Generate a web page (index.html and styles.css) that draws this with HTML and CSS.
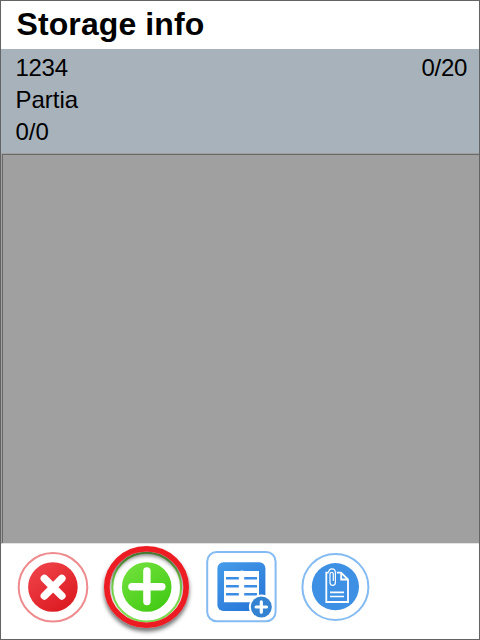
FILE: index.html
```html
<!DOCTYPE html>
<html lang="en">
<head>
<meta charset="utf-8">
<title>Storage info</title>
<link rel="stylesheet" href="styles.css">
</head>
<body>
<main class="screen">
  <h1 class="title">Storage info</h1>
  <section class="summary">
    <div class="row"><span class="num">1234</span><span class="num">0/20</span></div>
    <div class="row">Partia</div>
    <div class="row">0/0</div>
  </section>
  <section class="list"></section>
  <footer class="toolbar">
    <svg class="tool" width="90" height="95" viewBox="8 544 90 95">
      <defs>
        <linearGradient id="red" x1="0" y1="0" x2=".7" y2="1"><stop offset="0" stop-color="#f2474e"/><stop offset="1" stop-color="#dc1a21"/></linearGradient>
      </defs>
      <circle cx="53" cy="587.2" r="34.3" fill="#fff" stroke="#ee8b8e" stroke-width="2"/>
      <circle cx="52.9" cy="587" r="24.8" fill="url(#red)"/>
      <path d="M44.4 578.5l17.4 17.4M61.8 578.5l-17.4 17.4" stroke="#fff" stroke-width="7.6" stroke-linecap="round"/>
    </svg>
    <svg class="tool" width="98" height="95" viewBox="98 544 98 95">
      <defs>
        <linearGradient id="green" x1="0" y1="0" x2=".7" y2="1"><stop offset="0" stop-color="#76e340"/><stop offset="1" stop-color="#43cb15"/></linearGradient>
        <filter id="shadow" x="-20%" y="-20%" width="140%" height="150%"><feDropShadow dx="0" dy="3.5" stdDeviation="2.3" flood-color="#000" flood-opacity=".6"/></filter>
      </defs>
      <circle cx="146.7" cy="587.2" r="34.4" fill="#fff" stroke="#7ddf50" stroke-width="2"/>
      <circle cx="146.7" cy="587" r="24.8" fill="url(#green)"/>
      <path d="M146.9 571v30.6M131.9 586.7h30" stroke="#fff" stroke-width="7.4" stroke-linecap="round"/>
      <ellipse cx="146.5" cy="587" rx="39.7" ry="38.2" fill="none" stroke="#ed1c24" stroke-width="5.6" filter="url(#shadow)"/>
    </svg>
    <svg class="tool" width="92" height="95" viewBox="196 544 92 95">
      <defs>
        <linearGradient id="blue" x1="0" y1="0" x2=".7" y2="1"><stop offset="0" stop-color="#459ce9"/><stop offset="1" stop-color="#2877d8"/></linearGradient>
      </defs>
      <rect x="207.2" y="551.9" width="68.4" height="69.4" rx="9.5" fill="#fff" stroke="#83bbf2" stroke-width="2"/>
      <rect x="217.4" y="562.2" width="48" height="48.8" rx="6" fill="url(#blue)"/>
      <path d="M224 571h15.500l2.500-.5 2.500.5H259v31.200H224z" fill="#fff"/>
      <path d="M226 578.300h12.800M244.200 578.300H257M226 586.300h12.800M244.200 586.300H257M226 594.300h12.800M244.200 594.300H257" stroke="#3b8de3" stroke-width="2.500"/>
      <circle cx="261.300" cy="607" r="12.400" fill="#fff"/>
      <circle cx="261.300" cy="607" r="10.500" fill="#3482d2"/>
      <path d="M261.300 601.800v10.400M256.100 607h10.400" stroke="#fff" stroke-width="3.200" stroke-linecap="round"/>
    </svg>
    <svg class="tool" width="96" height="95" viewBox="288 544 96 95">
      <circle cx="335.400" cy="587" r="33" fill="#fff" stroke="#83bbf2" stroke-width="2"/>
      <circle cx="335.400" cy="586.700" r="23.600" fill="#3d90e4"/>
      <g fill="none" stroke="#fff">
        <path d="M329 572.700h-2.700v29.300h21.700v-22.500l-7-6.800h-4.500" stroke-width="1.800"/>
        <path d="M341.200 573v6.500h6.800" stroke-width="1.800"/>
        <path d="M330 592.400h14M330 596.500h14" stroke-width="1.600"/>
        <path d="M330 572v10.500c0 4 5.200 4 5.200 0V572" stroke="#3d90e4" stroke-width="3"/>
        <path d="M333.300 574.500v6.500M330 574v8.500c0 3.800 5.400 3.800 5.400 0v-9.700c0-5.200-6.800-5.200-6.800-.3M330 574.500c0-3 3.300-3 3.300 0" stroke-width="1.200"/>
      </g>
    </svg>
  </footer>
</main>
</body>
</html>
```
FILE: styles.css
```css
* {
  box-sizing: border-box;
}

body {
  margin: 0;
  font-family: "Liberation Sans", Arial, sans-serif;
  color: #000;
}

.screen {
  display: flex;
  flex-direction: column;
  width: 480px;
  height: 640px;
  border: 1px solid #646464;
  background: #fff;
}

.title {
  height: 48px;
  margin: 0;
  padding-left: 15.5px;
  font-size: 32px;
  line-height: 46px;
  letter-spacing: 0.1px;
}

.summary {
  height: 104px;
  padding: 3px 12px 0 14.5px;
  background: #a8b2bb;
}

.row {
  display: flex;
  justify-content: space-between;
  font-size: 24px;
  line-height: 32px;
}

.num {
  letter-spacing: -0.3px;
}

.list {
  flex: 1;
  border-top: 1px solid #a0a0a0;
  border-left: 1px solid #a0a0a0;
  border-bottom: 1px solid #e3e3e3;
  background: #a0a0a0;
  box-shadow: inset 1px 1px #696969;
}

.toolbar {
  display: flex;
  height: 95px;
  padding-left: 7px;
}

.tool {
  display: block;
  flex: none;
}
```
